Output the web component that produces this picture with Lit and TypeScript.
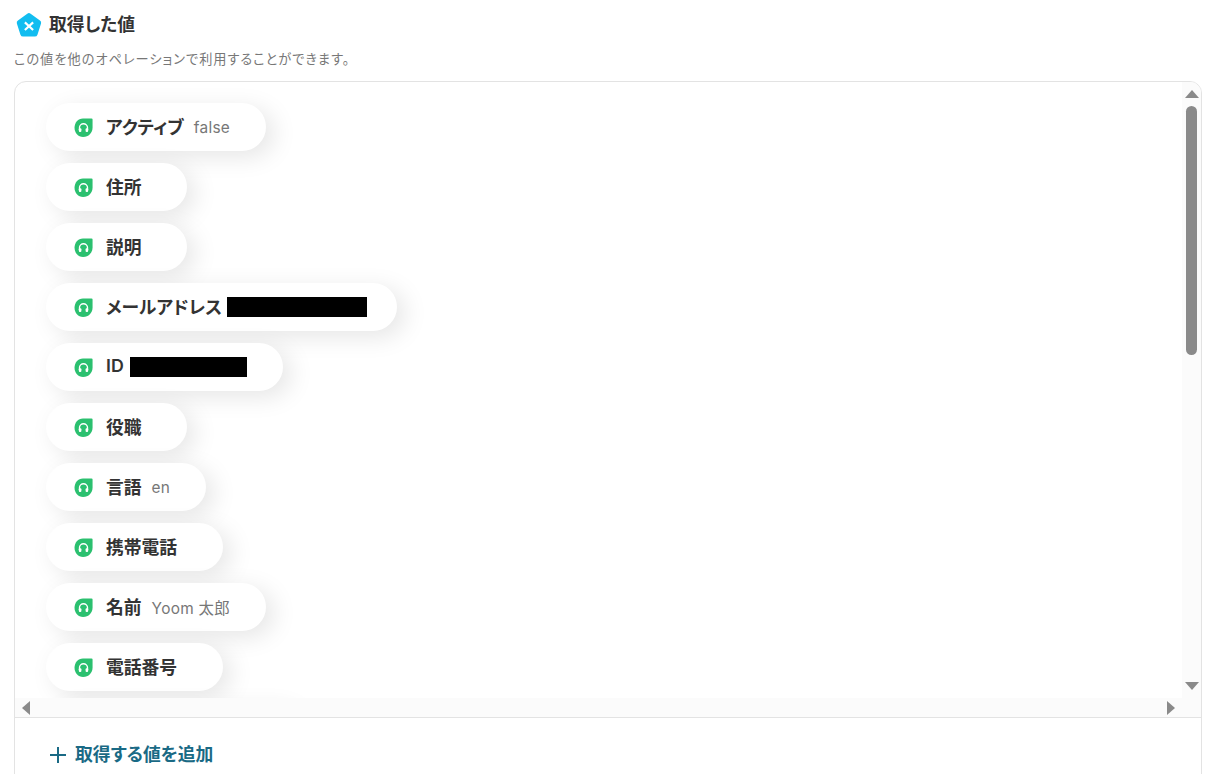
import { LitElement, html, css, svg } from "lit";
import { customElement } from "lit/decorators.js";

const rows: { k: string; v?: string; mask?: number; maskStart?: number; maskEnd?: number; w?: number }[] = [
  { k: "アクティブ", v: "false" },
  { k: "住所" },
  { k: "説明" },
  { k: "メールアドレス", mask: 140, maskStart: 5, maskEnd: -5 },
  { k: "ID", mask: 117, maskStart: 6, maskEnd: 1 },
  { k: "役職" },
  { k: "言語", v: "en" },
  { k: "携帯電話" },
  { k: "名前", v: "Yoom 太郎" },
  { k: "電話番号" },
  { k: "", w: 250 },
];

const leaf = svg`<svg class="leaf" viewBox="0 0 18 18" width="19" height="19">
  <path d="M8.5 .5H16.6a1 1 0 0 1 1 1V9c0 5-3.8 9-9 9C3.9 18 .5 14.2.5 9.3.5 4.4 3.8.5 8.5.5Z" fill="#2bc06f"/>
  <path d="M5.2 11.5V9.2a3.8 3.8 0 0 1 7.6 0v2.3" fill="none" stroke="#fff" stroke-width="1.3"/>
  <rect x="4.6" y="9.8" width="2.4" height="3.4" rx=".9" fill="#fff"/>
  <rect x="11" y="9.8" width="2.4" height="3.4" rx=".9" fill="#fff"/>
</svg>`;

@customElement("app-root")
export class AppRoot extends LitElement {
  static styles = css`
    :host {
      display: block;
      height: 774px;
      overflow: hidden;
      background: #fff;
      font-family: "Inter", "Noto Sans CJK JP", sans-serif;
      font-feature-settings: "palt";
      color: #333;
    }
    .head {
      display: flex;
      align-items: center;
      gap: 7px;
      padding: 12px 0 0 16px;
      height: 26px;
    }
    .title {
      font-size: 17.8px;
      font-weight: 600;
      line-height: 26px;
    }
    .sub {
      margin: 11px 0 0 14px;
      font-size: 13.2px;
      letter-spacing: 1px;
      line-height: 20px;
      color: #777;
      height: 20px;
    }
    .panel {
      margin: 12px 20px 0 14px;
      height: 720px;
      box-sizing: border-box;
      border: 1px solid #e3e3e3;
      border-radius: 12px;
      overflow: hidden;
      display: grid;
      grid-template-columns: 1fr 19px;
      grid-template-rows: 616px 20px 1fr;
    }
    .list {
      overflow: hidden;
      padding: 21px 0 0 31px;
      display: flex;
      flex-direction: column;
      align-items: flex-start;
      gap: 12px;
    }
    .pill {
      flex: none;
      height: 48px;
      box-sizing: border-box;
      padding: 0 35.5px 0 28px;
      border-radius: 24px;
      background: #fff;
      box-shadow: 8px 6px 24px rgba(0, 0, 0, 0.1);
      display: flex;
      align-items: center;
    }
    .leaf {
      flex: none;
      margin-right: 13px;
    }
    .key {
      font-size: 17.8px;
      font-weight: 600;
      color: #333;
      padding-bottom: 3px;
    }
    .val {
      margin-left: 10px;
      font-size: 15.4px;
      letter-spacing: 0.3px;
      color: #777;
    }
    .mask {
      height: 20px;
      background: #000;
    }
    .vtrack {
      background: #fbfbfb;
      display: flex;
      flex-direction: column;
      align-items: center;
      padding-top: 8px;
    }
    .thumb {
      width: 11px;
      height: 249px;
      margin-top: 8px;
      border-radius: 6px;
      background: #8a8a8a;
    }
    .down {
      margin-top: auto;
      margin-bottom: 8px;
    }
    .htrack {
      grid-column: 1 / 3;
      background: #fbfbfb;
      display: flex;
      align-items: center;
      justify-content: space-between;
      padding: 0 26px 0 7px;
      border-bottom: 1px solid #e3e3e3;
    }
    .add {
      grid-column: 1 / 3;
      display: flex;
      align-items: flex-start;
      gap: 9px;
      padding: 25px 0 0 35px;
      font-size: 17.8px;
      font-weight: 600;
      color: #1a6a85;
      line-height: 24px;
    }
    .add svg {
      margin-top: 4px;
      flex: none;
    }
    .arrow {
      display: block;
      flex: none;
    }
  `;

  render() {
    return html`
      <div class="head">
        <svg viewBox="1 0 24 24" width="26" height="26">
          <path d="M11.4 1.6a2.6 2.6 0 0 1 3.1 0l8.6 6.2a2.6 2.6 0 0 1 1 2.9l-3.3 10.2a2.6 2.6 0 0 1-2.5 1.8H7.6a2.6 2.6 0 0 1-2.5-1.8L1.8 10.7a2.6 2.6 0 0 1 1-2.9Z" fill="#12bdf0"/>
          <path d="M9.2 9.6 16.8 16.6M16.8 9.6 9.2 16.6" stroke="#fff" stroke-width="2" fill="none"/>
        </svg>
        <span class="title">取得した値</span>
      </div>
      <div class="sub">この値を他のオペレーションで利用することができます。</div>
      <div class="panel">
        <div class="list">
          ${rows.map(
            (r) => html`<div class="pill" style=${r.w ? `width:${r.w}px` : ""}>
              ${r.w ? "" : leaf}<span class="key">${r.k}</span>
              ${r.mask
                ? html`<span class="mask" style="width:${r.mask}px;margin-left:${r.maskStart}px;margin-right:${r.maskEnd}px"></span>`
                : html`<span class="val">${r.v ?? ""}</span>`}
            </div>`
          )}
        </div>
        <div class="vtrack">
          <svg class="arrow" width="14" height="8" viewBox="0 0 14 8"><path d="M7 0 14 8H0Z" fill="#8a8a8a"/></svg>
          <div class="thumb"></div>
          <svg class="arrow down" width="14" height="8" viewBox="0 0 14 8"><path d="M0 0H14L7 8Z" fill="#8a8a8a"/></svg>
        </div>
        <div class="htrack">
          <svg class="arrow" width="8" height="14" viewBox="0 0 8 14"><path d="M8 0V14L0 7Z" fill="#8a8a8a"/></svg>
          <svg class="arrow" width="8" height="14" viewBox="0 0 8 14"><path d="M0 0 8 7 0 14Z" fill="#8a8a8a"/></svg>
        </div>
        <div class="add">
          <svg width="16" height="16" viewBox="0 0 16 16"><path d="M8 0V16M0 8H16" stroke="#1a6a85" stroke-width="2"/></svg>
          <span>取得する値を追加</span>
        </div>
      </div>
    `;
  }
}
